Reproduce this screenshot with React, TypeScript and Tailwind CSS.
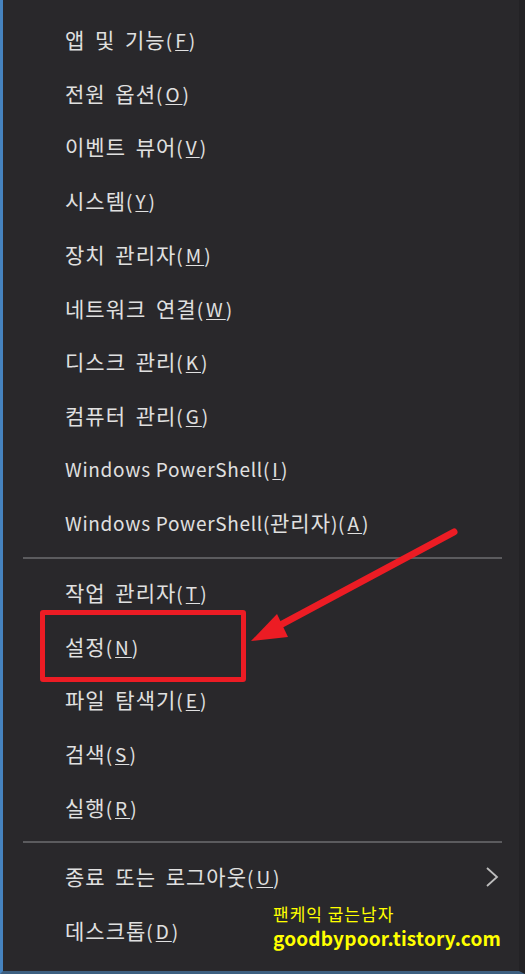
import { ReactNode } from 'react'

const font = '"Noto Sans CJK KR", "Noto Sans", sans-serif'

// Hangul in the original menu is set larger than the Latin text, so split the label into runs
function Runs({ text }: { text: string }) {
  const parts = text.split(/([\uAC00-\uD7A3][\uAC00-\uD7A3 ]*)/).filter(Boolean)
  return (
    <>
      {parts.map((p, i) =>
        /[\uAC00-\uD7A3]/.test(p) ? (
          <span key={i} className="text-[21px] tracking-[1px] [word-spacing:4px]">{p}</span>
        ) : (
          <span key={i} className="tracking-[0.7px]">{p}</span>
        )
      )}
    </>
  )
}

function Item({ label, k, chevron }: { label: string; k: string; chevron?: boolean }) {
  return (
    <div className="h-[53.7px] flex items-center pl-[62px] pr-[20px] text-[19px] text-[#e0e0e0]">
      <span>
        <Runs text={label} />
        <span className="tracking-[3px]">(<span className="underline underline-offset-2">{k}</span>)</span>
      </span>
      {chevron && (
        <svg className="ml-auto" width="14" height="22" viewBox="0 0 14 22">
          <path d="M2 2 L12 11 L2 20" fill="none" stroke="#bdbdbd" strokeWidth="1.8" />
        </svg>
      )}
    </div>
  )
}

function Divider() {
  return (
    <div className="py-[7px] pl-[20px] pr-[17px]">
      <div className="h-[2px] bg-[#5b5b5e]" />
    </div>
  )
}

function Group({ children }: { children: ReactNode }) {
  return <div className="flex flex-col">{children}</div>
}

export default function App() {
  return (
    <div
      className="relative w-[525px] h-[974px] bg-[#29282b] border-l-[3px] border-l-[#4683bf] border-b-[3px] border-b-[#3d5f80] border-r-[6px] border-r-[#232225] overflow-hidden"
      style={{ fontFamily: font }}
    >
      <div className="pt-[13px]">
        <Group>
          <Item label="앱 및 기능" k="F" />
          <Item label="전원 옵션" k="O" />
          <Item label="이벤트 뷰어" k="V" />
          <Item label="시스템" k="Y" />
          <Item label="장치 관리자" k="M" />
          <Item label="네트워크 연결" k="W" />
          <Item label="디스크 관리" k="K" />
          <Item label="컴퓨터 관리" k="G" />
          <Item label="Windows PowerShell" k="I" />
          <Item label="Windows PowerShell(관리자)" k="A" />
        </Group>
        <Divider />
        <Group>
          <Item label="작업 관리자" k="T" />
          <Item label="설정" k="N" />
          <Item label="파일 탐색기" k="E" />
          <Item label="검색" k="S" />
          <Item label="실행" k="R" />
        </Group>
        <Divider />
        <Group>
          <Item label="종료 또는 로그아웃" k="U" chevron />
          <Item label="데스크톱" k="D" />
        </Group>
      </div>

      {/* annotation: red box + arrow */}
      <div className="absolute left-[37px] top-[610px] w-[206px] h-[72px] border-[5px] border-[#ec1c24] rounded-[3px]" />
      <svg className="absolute left-0 top-0" width="525" height="974" viewBox="0 0 525 974">
        <line x1="451" y1="532" x2="268" y2="630" stroke="#ec1c24" strokeWidth="7" strokeLinecap="round" />
        <polygon points="248,641 274,614 285,637" fill="#ec1c24" />
      </svg>

      {/* watermark */}
      <div className="absolute left-[270px] top-[905px] text-[#ffff00] leading-none">
        <div className="text-[17px] tracking-[1px]">팬케익 굽는남자</div>
        <div className="mt-[6px] text-[19px] font-bold tracking-[0.2px]">goodbypoor.tistory.com</div>
      </div>
    </div>
  )
}
